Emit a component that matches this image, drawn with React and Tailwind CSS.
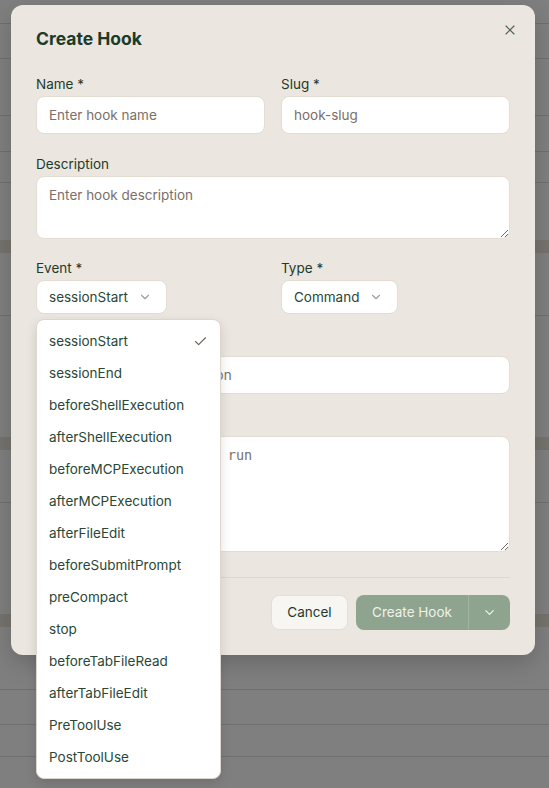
import React from 'react';
import { X, ChevronDown, Check } from 'lucide-react';

const events = [
  'sessionStart',
  'sessionEnd',
  'beforeShellExecution',
  'afterShellExecution',
  'beforeMCPExecution',
  'afterMCPExecution',
  'afterFileEdit',
  'beforeSubmitPrompt',
  'preCompact',
  'stop',
  'beforeTabFileRead',
  'afterTabFileEdit',
  'PreToolUse',
  'PostToolUse',
];

function Field({ label, children }) {
  return (
    <div className="flex flex-col">
      {label ? (
        <label className="text-[13.5px] leading-5 mb-0.5 text-[#1e3a2b]">{label}</label>
      ) : (
        <div className="h-5 mb-0.5" />
      )}
      {children}
    </div>
  );
}

function App() {
  return (
    <div className="relative h-[788px] overflow-hidden bg-[#7f7f7f] font-['Inter',sans-serif]">
      {/* Dimmed page behind the dialog */}
      <div className="flex flex-col h-full">
        <div className="h-[24px] border-b border-[#6f6f6f]" />
        <div className="h-[35px] border-b border-[#6f6f6f]" />
        <div className="h-[57px] border-b border-[#6f6f6f]" />
        <div className="h-[36px] border-b border-[#6f6f6f]" />
        <div className="h-[31px] border-b border-[#6f6f6f]" />
        <div className="h-[57px]" />
        <div className="h-[13px] bg-[#76736e]" />
        <div className="h-[63px] border-b border-[#6f6f6f]" />
        <div className="h-[121px]" />
        <div className="h-[13px] bg-[#76736e]" />
        <div className="h-[53px] border-b border-[#6f6f6f]" />
        <div className="h-[111px]" />
        <div className="h-[13px] bg-[#76736e]" />
        <div className="h-[63px] border-b border-[#6f6f6f]" />
        <div className="h-[35px] border-b border-[#6f6f6f]" />
        <div className="h-[32px] border-b border-[#6f6f6f]" />
      </div>

      {/* Dialog */}
      <div className="absolute left-[11px] top-[5px] w-[524px] rounded-xl bg-[#ebe6df] px-[25px] pt-6 pb-[25px] shadow-[0_8px_24px_rgba(0,0,0,0.18)]">
        <button className="absolute right-[17px] top-[17px] text-[#4b6357]">
          <X size={16} strokeWidth={1.75} />
        </button>
        <h2 className="text-[17.5px] leading-5 font-bold text-[#1b3b2a]">Create Hook</h2>

        <div className="mt-[25px] flex flex-col gap-5">
          <div className="grid grid-cols-2 gap-4">
            <Field label="Name *">
              <input
                className="h-[38px] rounded-lg border border-[#e2dcd3] bg-white px-3 text-[13.5px] text-[#1e3a2b] placeholder:text-[#7b6f68] outline-none"
                placeholder="Enter hook name"
              />
            </Field>
            <Field label="Slug *">
              <input
                className="h-[38px] rounded-lg border border-[#e2dcd3] bg-white px-3 text-[13.5px] text-[#1e3a2b] placeholder:text-[#7b6f68] outline-none"
                placeholder="hook-slug"
              />
            </Field>
          </div>

          <Field label="Description">
            <textarea
              className="h-[63px] rounded-lg border border-[#e2dcd3] bg-white px-3 py-2 text-[13.5px] leading-5 text-[#1e3a2b] placeholder:text-[#7b6f68] outline-none"
              placeholder="Enter hook description"
            />
          </Field>

          <div className="grid grid-cols-2 gap-4 -mt-px">
            <Field label="Event *">
              <div className="relative">
                <button className="flex h-[34px] items-center gap-2.5 rounded-lg border border-[#e2dcd3] bg-white pl-3 pr-[14px] text-[13.5px] text-[#2a4737]">
                  sessionStart
                  <ChevronDown size={14} className="text-[#a39c95]" />
                </button>
                {/* Open listbox */}
                <div className="absolute left-0 top-full z-10 mt-[5px] w-[185px] rounded-lg border border-[#ddd6cd] bg-white py-[5px] shadow-[0_4px_12px_rgba(0,0,0,0.12)]">
                  {events.map((e, i) => (
                    <div key={e} className="flex h-8 items-center justify-between px-3 text-[13.5px] text-[#2a4737]">
                      <span>{e}</span>
                      {i === 0 && <Check size={15} strokeWidth={1.75} className="text-[#6b6058]" />}
                    </div>
                  ))}
                </div>
              </div>
            </Field>
            <Field label="Type *">
              <div>
                <button className="flex h-[34px] items-center gap-2.5 rounded-lg border border-[#e2dcd3] bg-white pl-3 pr-[14px] text-[13.5px] text-[#2a4737]">
                  Command
                  <ChevronDown size={14} className="text-[#a39c95]" />
                </button>
              </div>
            </Field>
          </div>

          <Field>
            <input
              className="h-[38px] rounded-lg border border-[#e2dcd3] bg-white px-3 text-[13.5px] text-[#1e3a2b] placeholder:text-[#7b6f68] outline-none"
              placeholder="Optional matcher expression"
            />
          </Field>

          <Field>
            <textarea
              className="h-[116px] rounded-lg border border-[#e2dcd3] bg-white px-3 py-2 font-['DejaVu_Sans_Mono',monospace] text-[13.5px] leading-5 text-[#1e3a2b] placeholder:text-[#7b6f68] outline-none"
              placeholder="Enter bash command to run"
            />
          </Field>
        </div>

        <div className="mt-[25px] border-t border-[#ddd7ce] pt-[17px] flex justify-end gap-2">
          <button className="h-[35px] w-[77px] rounded-lg border border-[#e3ded6] bg-[#f7f6f3] text-[13.5px] text-[#1f3a2c]">
            Cancel
          </button>
          <div className="flex h-[35px] rounded-lg bg-[#8ea48f] text-[13.5px] text-[#eef1ea]">
            <button className="w-[113px] border-r border-[#a2b5a2]">Create Hook</button>
            <button className="flex w-[41px] items-center justify-center">
              <ChevronDown size={15} />
            </button>
          </div>
        </div>
      </div>
    </div>
  );
}

export default App;
